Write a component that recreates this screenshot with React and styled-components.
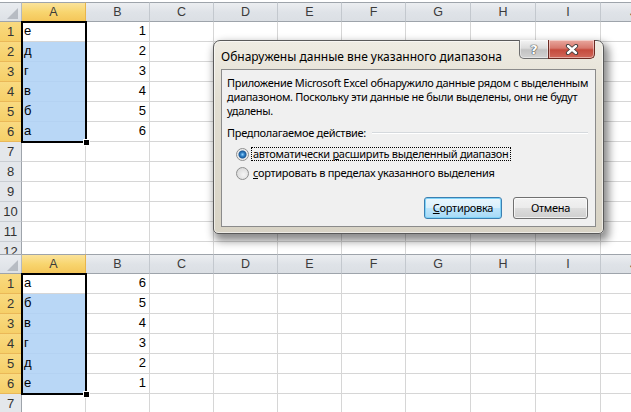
import React from 'react';
import styled, { createGlobalStyle } from 'styled-components';

const COLUMNS = ['A', 'B', 'C', 'D', 'E', 'F', 'G', 'H', 'I', 'J'];

const TOP_DATA = [
    ['е', 1], ['д', 2], ['г', 3], ['в', 4], ['б', 5], ['а', 6],
];

const BOTTOM_DATA = [
    ['а', 6], ['б', 5], ['в', 4], ['г', 3], ['д', 2], ['е', 1],
];

const GlobalStyle = createGlobalStyle`
    html, body {
        margin: 0;
        padding: 0;
        background: #fff;
    }
    body {
        overflow: hidden;
    }
`;

const Page = styled.div`
    position: relative;
    width: 631px;
    height: 412px;
    overflow: hidden;
    display: flex;
    flex-direction: column;
    background: #fff;
    font-family: "Liberation Sans", Arial, sans-serif;
`;

const SheetClip = styled.div`
    flex: none;
    height: ${p => p.$height}px;
    padding-top: ${p => p.$strip}px;
    box-sizing: border-box;
    overflow: hidden;
`;

const Grid = styled.div`
    display: grid;
    grid-template-columns: 22px 64px 64px 64px 64px 64px 64px 65px 65px 65px 65px;
    grid-auto-rows: 20px;
    width: max-content;
`;

const Corner = styled.div`
    grid-row: 1;
    grid-column: 1;
    box-sizing: border-box;
    border-top: 1px solid #9ea4ab;
    border-right: 1px solid #b4bac1;
    border-bottom: 1px solid #9ea4ab;
    background: linear-gradient(#e9ecf0, #dde1e6);
    display: flex;
    align-items: flex-end;
    justify-content: flex-end;
    padding: 0 3px 2px 0;
`;

const ColHeader = styled.div`
    grid-row: 1;
    grid-column: ${p => p.$c};
    box-sizing: border-box;
    border-top: 1px solid #9ea4ab;
    border-right: 1px solid ${p => (p.$active ? '#e8b54a' : '#c3c8ce')};
    border-bottom: 1px solid ${p => (p.$active ? '#e29b2a' : '#9ea4ab')};
    background: ${p => (p.$active
        ? 'linear-gradient(#fbe39a, #f8d56f 50%, #f4c659)'
        : 'linear-gradient(#eceef1, #dfe3e8 50%, #dbdfe4)')};
    color: #3b3b3b;
    font-size: 12.5px;
    display: flex;
    align-items: center;
    justify-content: center;
`;

const RowHeader = styled.div`
    grid-row: ${p => p.$r};
    grid-column: 1;
    box-sizing: border-box;
    border-right: 1px solid ${p => (p.$active ? '#e29b2a' : '#9ea4ab')};
    border-bottom: 1px solid ${p => (p.$active ? '#eab858' : '#c9cdd2')};
    background: ${p => (p.$active ? 'linear-gradient(#f9da80, #f6cf68)' : '#e4e7eb')};
    color: #333;
    font-size: 13px;
    display: flex;
    align-items: center;
    justify-content: center;
`;

const Cell = styled.div`
    grid-row: ${p => p.$r};
    grid-column: ${p => p.$c};
    box-sizing: border-box;
    border-right: 1px solid #d6d6d6;
    border-bottom: 1px solid ${p => (p.$selected ? '#b4d2f2' : '#d6d6d6')};
    background: ${p => (p.$selected ? '#b9d7f6' : '#fff')};
    color: #000;
    font-size: 13px;
    display: flex;
    align-items: flex-end;
    justify-content: ${p => (p.$number ? 'flex-end' : 'flex-start')};
    padding: 0 3px 3px 2px;
`;

const Selection = styled.div`
    grid-row: 2 / 8;
    grid-column: 2 / 3;
    margin: -1px;
    border: 2px solid #000;
    position: relative;
    z-index: 1;
    pointer-events: none;

    &::after {
        content: '';
        position: absolute;
        right: -5px;
        bottom: -5px;
        width: 5px;
        height: 5px;
        background: #000;
        border: 1px solid #fff;
    }
`;

const Dialog = styled.div`
    position: absolute;
    left: 213px;
    top: 40px;
    width: 391px;
    height: 194px;
    box-sizing: border-box;
    border: 1px solid #5a5a5a;
    border-radius: 7px 7px 5px 5px;
    background: linear-gradient(#efece3, #e2ded2 30%, #d8d3c5);
    box-shadow: inset 0 0 0 1px rgba(255, 255, 255, 0.55), 3px 5px 9px 2px rgba(0, 0, 0, 0.45);
    padding: 0 7px 6px;
    display: flex;
    flex-direction: column;
    font-family: "Noto Sans", "Open Sans", sans-serif;
    font-size: 12px;
    color: #000;
    z-index: 5;
`;

const TitleBar = styled.div`
    height: 28px;
    display: flex;
    align-items: flex-start;
`;

const Title = styled.div`
    flex: 1;
    margin-top: 8px;
    line-height: 16px;
    white-space: nowrap;
`;

const CaptionButtons = styled.div`
    display: flex;
    margin-top: -1px;
    margin-right: 1px;
`;

const CaptionButton = styled.div`
    width: ${p => p.$width}px;
    height: 19px;
    box-sizing: border-box;
    border: 1px solid ${p => (p.$close ? '#6b2a22' : '#6e6e6e')};
    border-top: none;
    border-radius: ${p => (p.$close ? '0 0 5px 0' : '0 0 0 5px')};
    margin-left: -1px;
    background: ${p => (p.$close
        ? 'linear-gradient(#e9a89f, #d7786d 45%, #c54a3c 55%, #d0685a)'
        : 'linear-gradient(#f4f4f4, #dcdcdc 45%, #c2c2c2 55%, #d2d2d2)')};
    box-shadow: inset 0 0 0 1px rgba(255, 255, 255, 0.45);
    display: flex;
    align-items: center;
    justify-content: center;
    color: #fff;
    font-family: "DejaVu Sans", sans-serif;
    font-weight: bold;
    font-size: 13px;
    text-shadow: 0 0 1px #444, 0 0 1px #444, 0 0 1px #444;
`;

const Client = styled.div`
    flex: 1;
    box-sizing: border-box;
    border: 1px solid #8b8b8b;
    background: #f0f0f0;
    padding: 6px 7px 7px 5px;
    display: flex;
    flex-direction: column;
    font-size: 11px;
    letter-spacing: -0.3px;
`;

const Message = styled.div`
    line-height: 14px;
    white-space: nowrap;
`;

const GroupLabel = styled.div`
    margin-top: 8px;
    line-height: 14px;
    display: flex;
    align-items: center;
    white-space: nowrap;

    &::after {
        content: '';
        flex: 1;
        margin-left: 6px;
        border-top: 1px solid #d5d9dd;
        border-bottom: 1px solid #fff;
    }
`;

const Options = styled.div`
    margin-top: 7px;
    display: flex;
    flex-direction: column;
    gap: 5px;
    padding-left: 9px;
`;

const Option = styled.div`
    height: 14px;
    display: flex;
    align-items: center;
    white-space: nowrap;
`;

const Radio = styled.span`
    width: 13px;
    height: 13px;
    box-sizing: border-box;
    border-radius: 50%;
    border: 1px solid #8e8f8f;
    background: ${p => (p.$checked
        ? 'radial-gradient(circle, #8fd0ff 0, #2f7fc3 2px, #1b5a99 3.5px, #e8e8e8 4.5px, #f4f4f4 6px)'
        : 'radial-gradient(circle at 60% 60%, #f4f4f4, #d2d2d2)')};
    margin-right: 2px;
    flex: none;
`;

const OptionLabel = styled.span`
    line-height: 12px;
    padding: 0 1px;
    border: 1px dotted ${p => (p.$focused ? '#000' : 'transparent')};
`;

const Buttons = styled.div`
    margin-top: auto;
    display: flex;
    justify-content: flex-end;
    gap: 11px;
`;

const Button = styled.div`
    width: ${p => p.$width}px;
    height: 22px;
    box-sizing: border-box;
    border-radius: 3px;
    border: 1px solid ${p => (p.$default ? '#3c7fb1' : '#707070')};
    background: ${p => (p.$default
        ? 'linear-gradient(#eaf6fd, #d9f0fc 50%, #bee6fd 50%, #a7d9f5)'
        : 'linear-gradient(#f2f2f2, #ebebeb 50%, #dddddd 50%, #cfcfcf)')};
    box-shadow: inset 0 0 0 1px ${p => (p.$default ? '#7fd3f8' : 'rgba(255,255,255,0.7)')};
    display: flex;
    align-items: center;
    justify-content: center;
    line-height: 14px;
`;

function CloseGlyph() {
    return (
        <svg width="14" height="11" viewBox="0 0 14 11">
            <path d="M3 2 L11 9 M11 2 L3 9" stroke="#3a3a3a" strokeWidth="4.2" strokeLinecap="round" />
            <path d="M3 2 L11 9 M11 2 L3 9" stroke="#fff" strokeWidth="2.4" strokeLinecap="round" />
        </svg>
    );
}

function CornerGlyph() {
    return (
        <svg width="11" height="11" viewBox="0 0 11 11">
            <polygon points="11,0 11,11 0,11" fill="#b7bcc3" />
        </svg>
    );
}

function Sheet({ data, rows, height, strip }) {
    const cells = [];
    for (let r = 1; r <= rows; r++) {
        const gridRow = r + 1;
        const record = data[r - 1];
        cells.push(<RowHeader key={`h${r}`} $r={gridRow} $active={!!record}>{r}</RowHeader>);
        COLUMNS.forEach((col, idx) => {
            let content = '';
            if (record && idx === 0) content = record[0];
            if (record && idx === 1) content = record[1];
            cells.push(
                <Cell
                    key={`${col}${r}`}
                    $r={gridRow}
                    $c={idx + 2}
                    $number={idx === 1}
                    $selected={idx === 0 && r > 1 && r <= data.length}
                >
                    {content}
                </Cell>
            );
        });
    }

    return (
        <SheetClip $height={height} $strip={strip}>
            <Grid>
                <Corner><CornerGlyph /></Corner>
                {COLUMNS.map((col, idx) => (
                    <ColHeader key={col} $c={idx + 2} $active={idx === 0}>{col}</ColHeader>
                ))}
                {cells}
                <Selection />
            </Grid>
        </SheetClip>
    );
}

export default function App() {
    return (
        <Page>
            <GlobalStyle />
            <Sheet data={TOP_DATA} rows={12} height={254} strip={2} />
            <Sheet data={BOTTOM_DATA} rows={8} height={158} strip={0} />

            <Dialog>
                <TitleBar>
                    <Title>Обнаружены данные вне указанного диапазона</Title>
                    <CaptionButtons>
                        <CaptionButton $width={30}>?</CaptionButton>
                        <CaptionButton $width={47} $close><CloseGlyph /></CaptionButton>
                    </CaptionButtons>
                </TitleBar>
                <Client>
                    <Message>
                        Приложение Microsoft Excel обнаружило данные рядом с выделенным<br />
                        диапазоном. Поскольку эти данные не были выделены, они не будут<br />
                        удалены.
                    </Message>
                    <GroupLabel>Предполагаемое действие:</GroupLabel>
                    <Options>
                        <Option>
                            <Radio $checked />
                            <OptionLabel $focused>автоматически <u>р</u>асширить выделенный диапазон</OptionLabel>
                        </Option>
                        <Option>
                            <Radio />
                            <OptionLabel><u>с</u>ортировать в пределах указанного выделения</OptionLabel>
                        </Option>
                    </Options>
                    <Buttons>
                        <Button $width={78} $default><span><u>С</u>ортировка</span></Button>
                        <Button $width={75}>Отмена</Button>
                    </Buttons>
                </Client>
            </Dialog>
        </Page>
    );
}
